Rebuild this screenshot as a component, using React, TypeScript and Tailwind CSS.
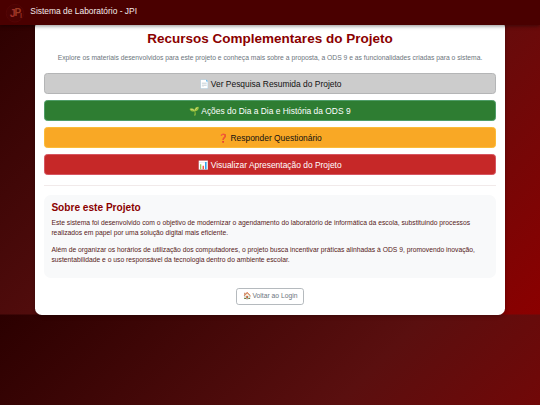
const resources = [
  { icon: '📄', label: 'Ver Pesquisa Resumida do Projeto', tone: 'bg-[#cccccc] border-[#b4b5b6] text-[#111111]' },
  { icon: '🌱', label: 'Ações do Dia a Dia e História da ODS 9', tone: 'bg-[#2e7d32] border-[#4f9d68] text-white' },
  { icon: '❓', label: 'Responder Questionário', tone: 'bg-[#f9a825] border-[#fbbb38] text-[#111111]' },
  { icon: '📊', label: 'Visualizar Apresentação do Projeto', tone: 'bg-[#c62828] border-[#d65560] text-white' },
];

function Logo() {
  return (
    <svg viewBox="0 0 20 20" className="size-[20px]" fontFamily="Liberation Sans, sans-serif" fontWeight="bold">
      <circle cx="10" cy="10.2" r="8.8" fill="#4b0202" stroke="#570707" strokeWidth="0.7" />
      <text x="4.8" y="13.6" fontSize="10.5" fill="#a13029">J</text>
      <text x="9.6" y="13.4" fontSize="10" fill="#9c3a24">P</text>
      <text x="15" y="14.6" fontSize="7" fill="#942f22">I</text>
    </svg>
  );
}

function Header() {
  return (
    <header className="relative z-10 flex h-[25.3px] items-center bg-[#4a0000] pl-[5px] shadow-[0_1px_4px_rgba(0,0,0,0.45)]">
      <Logo />
      <span className="-mt-[3px] ml-[5.3px] text-[8.44px] leading-[12.7px] text-[#f5eaea]">Sistema de Laboratório - JPI</span>
    </header>
  );
}

export default function App() {
  return (
    <div className="h-[405px] w-[540px] overflow-hidden bg-[linear-gradient(135deg,#2b0000,#5a0f0f,#8b0000)] bg-[length:540px_314.5px] font-['Liberation_Sans',Arial,sans-serif]">
      <Header />
      <main className="-mt-[5.5px] ml-[34.6px] w-[470.8px] rounded-[6.75px] bg-white px-[9.9px] pt-[10.9px] pb-[10.3px] shadow-[0_1px_4px_rgba(0,0,0,0.3)]">
        <h1 className="text-center text-[13.5px] leading-[16.2px] font-bold text-[#8b0000]">Recursos Complementares do Projeto</h1>
        <p className="mt-[6px] text-center text-[6.75px] leading-[10.125px] text-[#6c757d]">
          Explore os materiais desenvolvidos para este projeto e conheça mais sobre a proposta, a ODS 9 e as funcionalidades criadas para o sistema.
        </p>
        <nav className="mt-[10.125px] grid gap-[6px]">
          {resources.map((r) => (
            <button key={r.label} className={`h-[21px] rounded-[3.4px] border pt-[1.4px] text-[8.44px] leading-[12.65px] ${r.tone}`}>
              {r.icon} {r.label}
            </button>
          ))}
        </nav>
        <hr className="mt-[9.4px] mb-[9.4px] border-t border-[#f1eaea]" />
        <section className="h-[83px] rounded-[6.75px] bg-[#f8f9fa] px-[6.9px] pt-[7.1px] text-[6.75px] leading-[10.125px] text-[#571919]">
          <h2 className="mb-[3.4px] text-[10.125px] leading-[12.15px] font-bold text-[#8b0000]">Sobre este Projeto</h2>
          <p className="mb-[6.75px]">
            Este sistema foi desenvolvido com o objetivo de modernizar o agendamento do laboratório de informática da escola, substituindo processos
            realizados em papel por uma solução digital mais eficiente.
          </p>
          <p>
            Além de organizar os horários de utilização dos computadores, o projeto busca incentivar práticas alinhadas à ODS 9, promovendo inovação,
            sustentabilidade e o uso responsável da tecnologia dentro do ambiente escolar.
          </p>
        </section>
        <div className="mt-[10.125px] flex justify-center">
          <button className="h-[16.6px] w-[67.5px] rounded-[2.8px] border border-[#b5babe] text-[6.75px] leading-[10.125px] text-[#6c757d]">🏠 Voltar ao Login</button>
        </div>
      </main>
    </div>
  );
}
